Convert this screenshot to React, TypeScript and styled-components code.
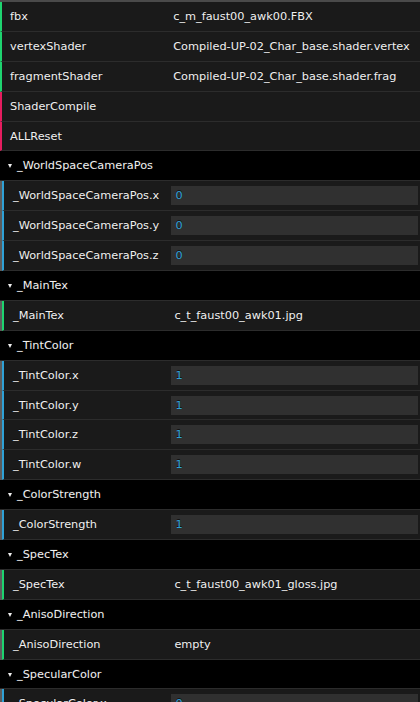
import React from "react";
import styled, {createGlobalStyle} from "styled-components";

type Kind = "string" | "number" | "func";

interface IItem {
    name: string,
    kind: Kind,
    value?: string
}

interface IFolder {
    title: string,
    items: IItem[]
}

const GlobalStyle = createGlobalStyle`
    html, body {
        margin: 0;
        padding: 0;
        background: #1a1a1a;
        overflow: hidden;
    }
`,

    kindColor: Record<Kind, string> = {
        string: "#1ed36f",
        number: "#2fa1d6",
        func: "#e61d5f"
    },

    Panel = styled.div`
        width: 420px;
        height: 702px;
        overflow: hidden;
        border-top: 2px solid #4a4a4a;
        box-sizing: border-box;
        background: #1a1a1a;
        font-family: "DejaVu Sans", "Liberation Sans", sans-serif;
        font-size: 11.3px;
        color: #f0f0f0;
        text-shadow: 0 -1px 0 #111111;
`,

    Row = styled.div<{$kind: Kind}>`
        display: flex;
        align-items: center;
        height: 29.9px;
        box-sizing: border-box;
        border-bottom: 1px solid #2c2c2c;
        border-left: 2px solid ${(p) => kindColor[p.$kind]};
        background: #1a1a1a;
`,

    Name = styled.span<{$nested?: boolean}>`
        width: 40%;
        flex: none;
        box-sizing: border-box;
        padding-left: ${(p) => (p.$nested ? "9px" : "8px")};
        white-space: nowrap;
        overflow: hidden;
`,

    Control = styled.div`
        flex: 1;
        display: flex;
        align-items: center;
        padding-right: 2px;
        min-width: 0;
`,

    StringValue = styled.span`
        padding-left: 4px;
        white-space: nowrap;
`,

    NumberInput = styled.div`
        flex: 1;
        height: 19px;
        margin-left: 1px;
        background: #303030;
        color: #2fa1d6;
        display: flex;
        align-items: center;
        padding-left: 4px;
`,

    Header = styled.div`
        display: flex;
        align-items: center;
        gap: 5px;
        height: 29.9px;
        box-sizing: border-box;
        padding-left: 8px;
        background: #000000;
        border-bottom: 1px solid #2c2c2c;
`,

    Arrow = styled.span`
        width: 0;
        height: 0;
        border-left: 2.5px solid transparent;
        border-right: 2.5px solid transparent;
        border-top: 4px solid #eeeeee;
        margin-top: 1px;
`,

    Children = styled.div`
        border-left: 2px solid #5c5c5c;
`,

    topItems: IItem[] = [
        {name: "fbx", kind: "string", value: "c_m_faust00_awk00.FBX"},
        {name: "vertexShader", kind: "string", value: "Compiled-UP-02_Char_base.shader.vertex"},
        {name: "fragmentShader", kind: "string", value: "Compiled-UP-02_Char_base.shader.frag"},
        {name: "ShaderCompile", kind: "func"},
        {name: "ALLReset", kind: "func"}
    ],

    folders: IFolder[] = [
        {title: "_WorldSpaceCameraPos",
            items: ["x", "y", "z"].map((c) => ({name: `_WorldSpaceCameraPos.${c}`, kind: "number" as Kind, value: "0"}))},
        {title: "_MainTex", items: [{name: "_MainTex", kind: "string", value: "c_t_faust00_awk01.jpg"}]},
        {title: "_TintColor",
            items: ["x", "y", "z", "w"].map((c) => ({name: `_TintColor.${c}`, kind: "number" as Kind, value: "1"}))},
        {title: "_ColorStrength", items: [{name: "_ColorStrength", kind: "number", value: "1"}]},
        {title: "_SpecTex", items: [{name: "_SpecTex", kind: "string", value: "c_t_faust00_awk01_gloss.jpg"}]},
        {title: "_AnisoDirection", items: [{name: "_AnisoDirection", kind: "string", value: "empty"}]},
        {title: "_SpecularColor", items: [{name: "_SpecularColor.x", kind: "number", value: "0"}]}
    ];

function ItemRow ({item, nested}: {item: IItem, nested?: boolean}) {

    return (
        <Row $kind={item.kind}>
            <Name $nested={nested}>
                {item.name}
            </Name>
            <Control>
                {item.kind === "string" && <StringValue>{item.value}</StringValue>}
                {item.kind === "number" && <NumberInput>{item.value}</NumberInput>}
            </Control>
        </Row>
    );

}

export default function App () {

    return (
        <>
            <GlobalStyle />
            <Panel>
                {topItems.map((item) => <ItemRow key={item.name} item={item} />)}
                {folders.map((folder) => (
                    <div key={folder.title}>
                        <Header>
                            <Arrow />
                            {folder.title}
                        </Header>
                        <Children>
                            {folder.items.map((item) => <ItemRow key={item.name} item={item} nested />)}
                        </Children>
                    </div>
                ))}
            </Panel>
        </>
    );

}
